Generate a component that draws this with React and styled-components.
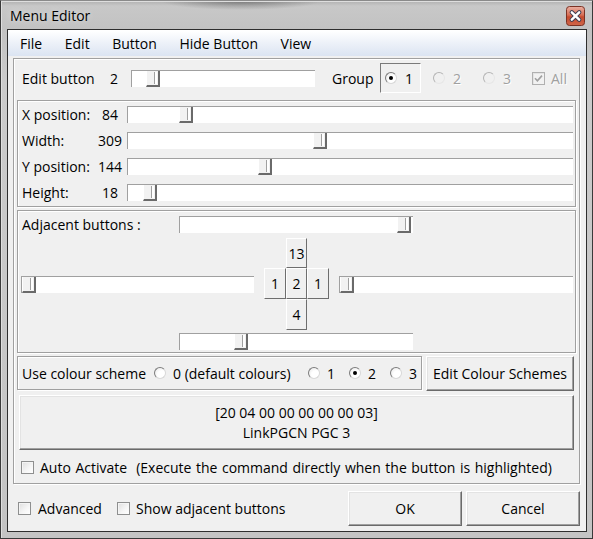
import React from "react";
import styled, { createGlobalStyle } from "styled-components";

const GlobalStyle = createGlobalStyle`
  html, body { margin: 0; padding: 0; }
  body {
    background: #5a5a5a;
    font-family: "Open Sans", "Noto Sans", sans-serif;
    font-size: 14px;
    color: #000;
  }
  * { box-sizing: border-box; }
`;

const Window = styled.div`
  width: 593px;
  height: 539px;
  display: flex;
  flex-direction: column;
  border: 1px solid #3a3a3a;
  border-top-color: #8a8a8a;
  background:
    radial-gradient(ellipse 80px 9px at 240px 0px, rgba(50, 50, 50, 0.45), rgba(50, 50, 50, 0)),
    linear-gradient(180deg, #b0b0b0 0px, #c8c8c8 5px, #c2c2c2 28px, #cbcbcb 80px, #c4c4c4 100%);
  box-shadow: inset 1px 1px 0 #dedede;
`;

const TitleBar = styled.div`
  height: 28px;
  display: flex;
  align-items: center;
  padding: 0 7px 0 9px;
  flex: none;
`;

const Title = styled.span`
  font-size: 14px;
  color: #000;
  text-shadow: 0 0 6px rgba(255, 255, 255, 0.6);
`;

const CloseBox = styled.div`
  margin-left: auto;
  align-self: flex-start;
  margin-top: 5px;
  width: 19px;
  height: 20px;
  display: flex;
`;

const Client = styled.div`
  margin-left: 6px;
  width: 580px;
  height: 503px;
  border: 1px solid #2e2e2e;
  background: #f0f0f0;
  display: flex;
  flex-direction: column;
  flex: none;
`;

const MenuBar = styled.div`
  height: 26px;
  display: flex;
  align-items: center;
  gap: 22.6px;
  padding-left: 12px;
  background: linear-gradient(180deg, #ffffff 0px, #eef2f9 45%, #dbe4f2 100%);
  border-top: 1px solid #ffffff;
  flex: none;
`;

const MenuItem = styled.span`
  font-size: 14px;
`;

const Body = styled.div`
  display: flex;
  flex-direction: column;
  padding: 2px 6px 0 5px;
`;

const OuterFrame = styled.div`
  height: 426px;
  border: 1px solid #a0a0a0;
  box-shadow: inset 1px 1px 0 #ffffff, 1px 1px 0 #ffffff;
  padding: 4px 3px 5px 3px;
  display: flex;
  flex-direction: column;
`;

const EditRow = styled.div`
  height: 30px;
  display: flex;
  align-items: center;
  padding-left: 5px;
  flex: none;
`;

const Label = styled.span`
  width: ${(p) => p.$w}px;
  flex: none;
  white-space: nowrap;
`;

const Value = styled.span`
  width: ${(p) => p.$w}px;
  flex: none;
  text-align: center;
`;

const Track = styled.div`
  position: relative;
  height: 17px;
  width: ${(p) => (p.$w ? `${p.$w}px` : "auto")};
  flex: ${(p) => (p.$w ? "none" : "1")};
  margin-left: ${(p) => p.$ml || 0}px;
  margin-right: ${(p) => p.$mr || 0}px;
  background: #ffffff;
  border-top: 1px solid #a0a0a0;
  border-left: 1px solid #a0a0a0;
`;

const Thumb = styled.span`
  position: absolute;
  top: 0;
  left: ${(p) => p.$pos}px;
  width: 14px;
  height: 16px;
  background: #f2f2f2;
  border-left: 1px solid #ffffff;
  border-right: 2px solid #6a6a6a;
  border-bottom: 2px solid #6a6a6a;
  &::before {
    content: "";
    position: absolute;
    left: 7px;
    top: 1px;
    width: 1px;
    height: 12px;
    background: #a0a0a0;
  }
  &::after {
    content: "";
    position: absolute;
    left: 8px;
    top: 1px;
    width: 2px;
    height: 12px;
    background: #ffffff;
  }
`;

const Slider = ({ w, pos, ml, mr }) => (
  <Track $w={w} $ml={ml} $mr={mr}>
    <Thumb $pos={pos} />
  </Track>
);

const GroupLabel = styled.span`
  margin-left: 17px;
  width: 48px;
  flex: none;
`;

const SunkenBox = styled.div`
  width: 41px;
  height: 30px;
  flex: none;
  display: flex;
  align-items: center;
  padding-left: 4px;
  border: 1px solid;
  border-color: #7a7a7a #ffffff #ffffff #7a7a7a;
`;

const Choice = styled.label`
  display: flex;
  align-items: center;
  gap: ${(p) => p.$gap || 8}px;
  width: ${(p) => (p.$w ? `${p.$w}px` : "auto")};
  margin-left: ${(p) => p.$ml || 0}px;
  flex: none;
  white-space: pre;
  word-spacing: ${(p) => p.$ws || 0}px;
  color: ${(p) => (p.$disabled ? "#a0a0a0" : "#000")};
  text-shadow: ${(p) => (p.$disabled ? "1px 1px 0 #ffffff" : "none")};
`;

const RadioDot = styled.span`
  position: relative;
  width: 12px;
  height: 12px;
  flex: none;
  border-radius: 50%;
  border: 1px solid;
  border-color: ${(p) =>
    p.$disabled ? "#b4b4b4 #e6e6e6 #e6e6e6 #b4b4b4" : "#7c7c7c #d8d8d8 #d8d8d8 #7c7c7c"};
  background: ${(p) =>
    p.$disabled ? "#f0f0f0" : "radial-gradient(circle at 65% 65%, #ffffff 40%, #e4e4e4 100%)"};
  &::after {
    content: "";
    display: ${(p) => (p.$on ? "block" : "none")};
    position: absolute;
    left: 3px;
    top: 3px;
    width: 4px;
    height: 4px;
    border-radius: 50%;
    background: #000;
  }
`;

const CheckBox = styled.span`
  width: 13px;
  height: 13px;
  flex: none;
  display: flex;
  align-items: center;
  justify-content: center;
  border: 1px solid ${(p) => (p.$disabled ? "#b0b0b0" : "#8e8f8f")};
  background: ${(p) =>
    p.$disabled ? "#f2f2f2" : "linear-gradient(135deg, #dedede 0%, #f6f6f6 60%, #ffffff 100%)"};
  box-shadow: inset 1px 1px 0 ${(p) => (p.$disabled ? "#e4e4e4" : "#f4f4f4")};
`;

const EtchedGroup = styled.div`
  flex: none;
  height: ${(p) => p.$h}px;
  margin-top: ${(p) => p.$mt || 0}px;
  border: 1px solid #a0a0a0;
  box-shadow: inset 1px 1px 0 #ffffff, 1px 1px 0 #ffffff;
  display: flex;
  flex-direction: column;
`;

const PosGroup = styled(EtchedGroup)`
  padding: 5px 2px 5px 4px;
  gap: 9px;
`;

const PosRow = styled.div`
  height: 17px;
  display: flex;
  align-items: center;
`;

const AdjGroup = styled(EtchedGroup)`
  padding: 5px 2px 2px 0;
`;

const AdjTop = styled.div`
  height: 17px;
  display: flex;
  align-items: center;
  padding-left: 4px;
`;

const AdjMiddle = styled.div`
  margin-top: 5px;
  height: 92px;
  display: flex;
  align-items: center;
  padding-left: 3px;
  gap: 10px;
`;

const AdjBottom = styled.div`
  margin-top: 3px;
  height: 17px;
  display: flex;
  padding-left: 161px;
`;

const Cross = styled.div`
  display: grid;
  grid-template-columns: 22px 21px 22px;
  grid-template-rows: 30px 31px 31px;
  flex: none;
`;

const Cell = styled.div`
  grid-column: ${(p) => p.$c};
  grid-row: ${(p) => p.$r};
  display: flex;
  align-items: center;
  justify-content: center;
  border: 1px solid;
  border-color: #ffffff #6e6e6e #6e6e6e #ffffff;
`;

const ColourRow = styled.div`
  margin-top: 3px;
  height: 35px;
  display: flex;
  gap: 4px;
  flex: none;
`;

const ColourGroup = styled.div`
  width: 405px;
  height: 34px;
  flex: none;
  border: 1px solid #a0a0a0;
  box-shadow: inset 1px 1px 0 #ffffff, 1px 1px 0 #ffffff;
  display: flex;
  align-items: center;
  padding-left: 4px;
`;

const RaisedButton = styled.button`
  font: inherit;
  color: #000;
  background: #f0f0f0;
  border: 1px solid;
  border-color: #ffffff #6a6a6a #6a6a6a #ffffff;
  box-shadow: inset -1px -1px 0 #a0a0a0, inset 1px 1px 0 #e3e3e3;
  padding: 0;
  width: ${(p) => p.$w}px;
  height: ${(p) => p.$h}px;
  margin-left: ${(p) => p.$ml || 0}px;
  margin-top: ${(p) => p.$mt || 0}px;
  flex: none;
  display: flex;
  flex-direction: column;
  align-items: center;
  justify-content: center;
  line-height: 20px;
`;

const AutoRow = styled.div`
  margin-top: 6px;
  height: 22px;
  display: flex;
  align-items: center;
  padding-left: 4px;
  flex: none;
`;

const BottomRow = styled.div`
  margin-top: 7px;
  height: 35px;
  display: flex;
  align-items: center;
  padding-left: 5px;
`;

const Buttons = styled.div`
  margin-left: auto;
  display: flex;
  gap: 4px;
`;

const CloseIcon = () => (
  <svg width="19" height="20" viewBox="0 0 19 20">
    <defs>
      <linearGradient id="cg" x1="0" y1="0" x2="0" y2="1">
        <stop offset="0" stopColor="#eab0a2" />
        <stop offset="0.45" stopColor="#d76e55" />
        <stop offset="0.55" stopColor="#c54a2e" />
        <stop offset="1" stopColor="#d0674a" />
      </linearGradient>
    </defs>
    <rect x="0.5" y="0.5" width="18" height="19" rx="3" fill="url(#cg)" stroke="#7b3224" />
    <path d="M5.8 6.3 L13.2 13.7 M13.2 6.3 L5.8 13.7" stroke="#3e3e52" strokeWidth="4.4" strokeLinecap="round" />
    <path d="M5.8 6.3 L13.2 13.7 M13.2 6.3 L5.8 13.7" stroke="#ffffff" strokeWidth="2.4" strokeLinecap="round" />
  </svg>
);

const Tick = ({ color }) => (
  <svg width="9" height="9" viewBox="0 0 9 9">
    <path d="M1 4.2 L3.4 6.8 L8 1.6" fill="none" stroke={color} strokeWidth="1.6" />
  </svg>
);

const Radio = ({ on, disabled, children, w, ml, gap }) => (
  <Choice $w={w} $ml={ml} $gap={gap} $disabled={disabled}>
    <RadioDot $on={on} $disabled={disabled} />
    <span>{children}</span>
  </Choice>
);

const Check = ({ checked, disabled, children, w, ml, gap, ws }) => (
  <Choice $w={w} $ml={ml} $gap={gap} $ws={ws} $disabled={disabled}>
    <CheckBox $disabled={disabled}>{checked && <Tick color={disabled ? "#a0a0a0" : "#000"} />}</CheckBox>
    <span>{children}</span>
  </Choice>
);

const positions = [
  { label: "X position:", value: "84", pos: 51 },
  { label: "Width:", value: "309", pos: 185 },
  { label: "Y position:", value: "144", pos: 130 },
  { label: "Height:", value: "18", pos: 15 },
];

export default function App() {
  return (
    <>
      <GlobalStyle />
      <Window>
        <TitleBar>
          <Title>Menu Editor</Title>
          <CloseBox>
            <CloseIcon />
          </CloseBox>
        </TitleBar>
        <Client>
          <MenuBar>
            <MenuItem>File</MenuItem>
            <MenuItem>Edit</MenuItem>
            <MenuItem>Button</MenuItem>
            <MenuItem>Hide Button</MenuItem>
            <MenuItem>View</MenuItem>
          </MenuBar>
          <Body>
            <OuterFrame>
              <EditRow>
                <Label $w={82}>Edit button</Label>
                <Value $w={20}>2</Value>
                <Slider w={184} pos={14} ml={7} />
                <GroupLabel>Group</GroupLabel>
                <SunkenBox>
                  <Radio on>1</Radio>
                </SunkenBox>
                <Radio disabled w={50} ml={12} gap={8}>2</Radio>
                <Radio disabled w={49} gap={8}>3</Radio>
                <Check disabled checked gap={6}>All</Check>
              </EditRow>

              <PosGroup $h={107} $mt={7}>
                {positions.map((r) => (
                  <PosRow key={r.label}>
                    <Label $w={74}>{r.label}</Label>
                    <Value $w={28}>{r.value}</Value>
                    <Slider pos={r.pos} ml={3} />
                  </PosRow>
                ))}
              </PosGroup>

              <AdjGroup $h={143} $mt={3}>
                <AdjTop>
                  <Label $w={157}>Adjacent buttons :</Label>
                  <Slider w={234} pos={217} />
                </AdjTop>
                <AdjMiddle>
                  <Slider w={233} pos={0} />
                  <Cross>
                    <Cell $c={2} $r={1}>13</Cell>
                    <Cell $c={1} $r={2}>1</Cell>
                    <Cell $c={2} $r={2}>2</Cell>
                    <Cell $c={3} $r={2}>1</Cell>
                    <Cell $c={2} $r={3}>4</Cell>
                  </Cross>
                  <Slider w={234} pos={0} />
                </AdjMiddle>
                <AdjBottom>
                  <Slider w={234} pos={54} />
                </AdjBottom>
              </AdjGroup>

              <ColourRow>
                <ColourGroup>
                  <Label $w={132}>Use colour scheme</Label>
                  <Radio w={154} gap={7}>0 (default colours)</Radio>
                  <Radio w={41} gap={7}>1</Radio>
                  <Radio w={41} on gap={7}>2</Radio>
                  <Radio gap={7}>3</Radio>
                </ColourGroup>
                <RaisedButton $w={148} $h={35}>Edit Colour Schemes</RaisedButton>
              </ColourRow>

              <RaisedButton $w={555} $h={55} $ml={2} $mt={4}>
                <span>[20 04 00 00 00 00 00 03]</span>
                <span>LinkPGCN PGC 3</span>
              </RaisedButton>

              <AutoRow>
                <Check gap={6} ws={0.9}>
                  {"Auto Activate  (Execute the command directly when the button is highlighted)"}
                </Check>
              </AutoRow>
            </OuterFrame>

            <BottomRow>
              <Check gap={7} w={99}>Advanced</Check>
              <Check gap={6}>Show adjacent buttons</Check>
              <Buttons>
                <RaisedButton $w={114} $h={35}>OK</RaisedButton>
                <RaisedButton $w={114} $h={35}>Cancel</RaisedButton>
              </Buttons>
            </BottomRow>
          </Body>
        </Client>
      </Window>
    </>
  );
}
